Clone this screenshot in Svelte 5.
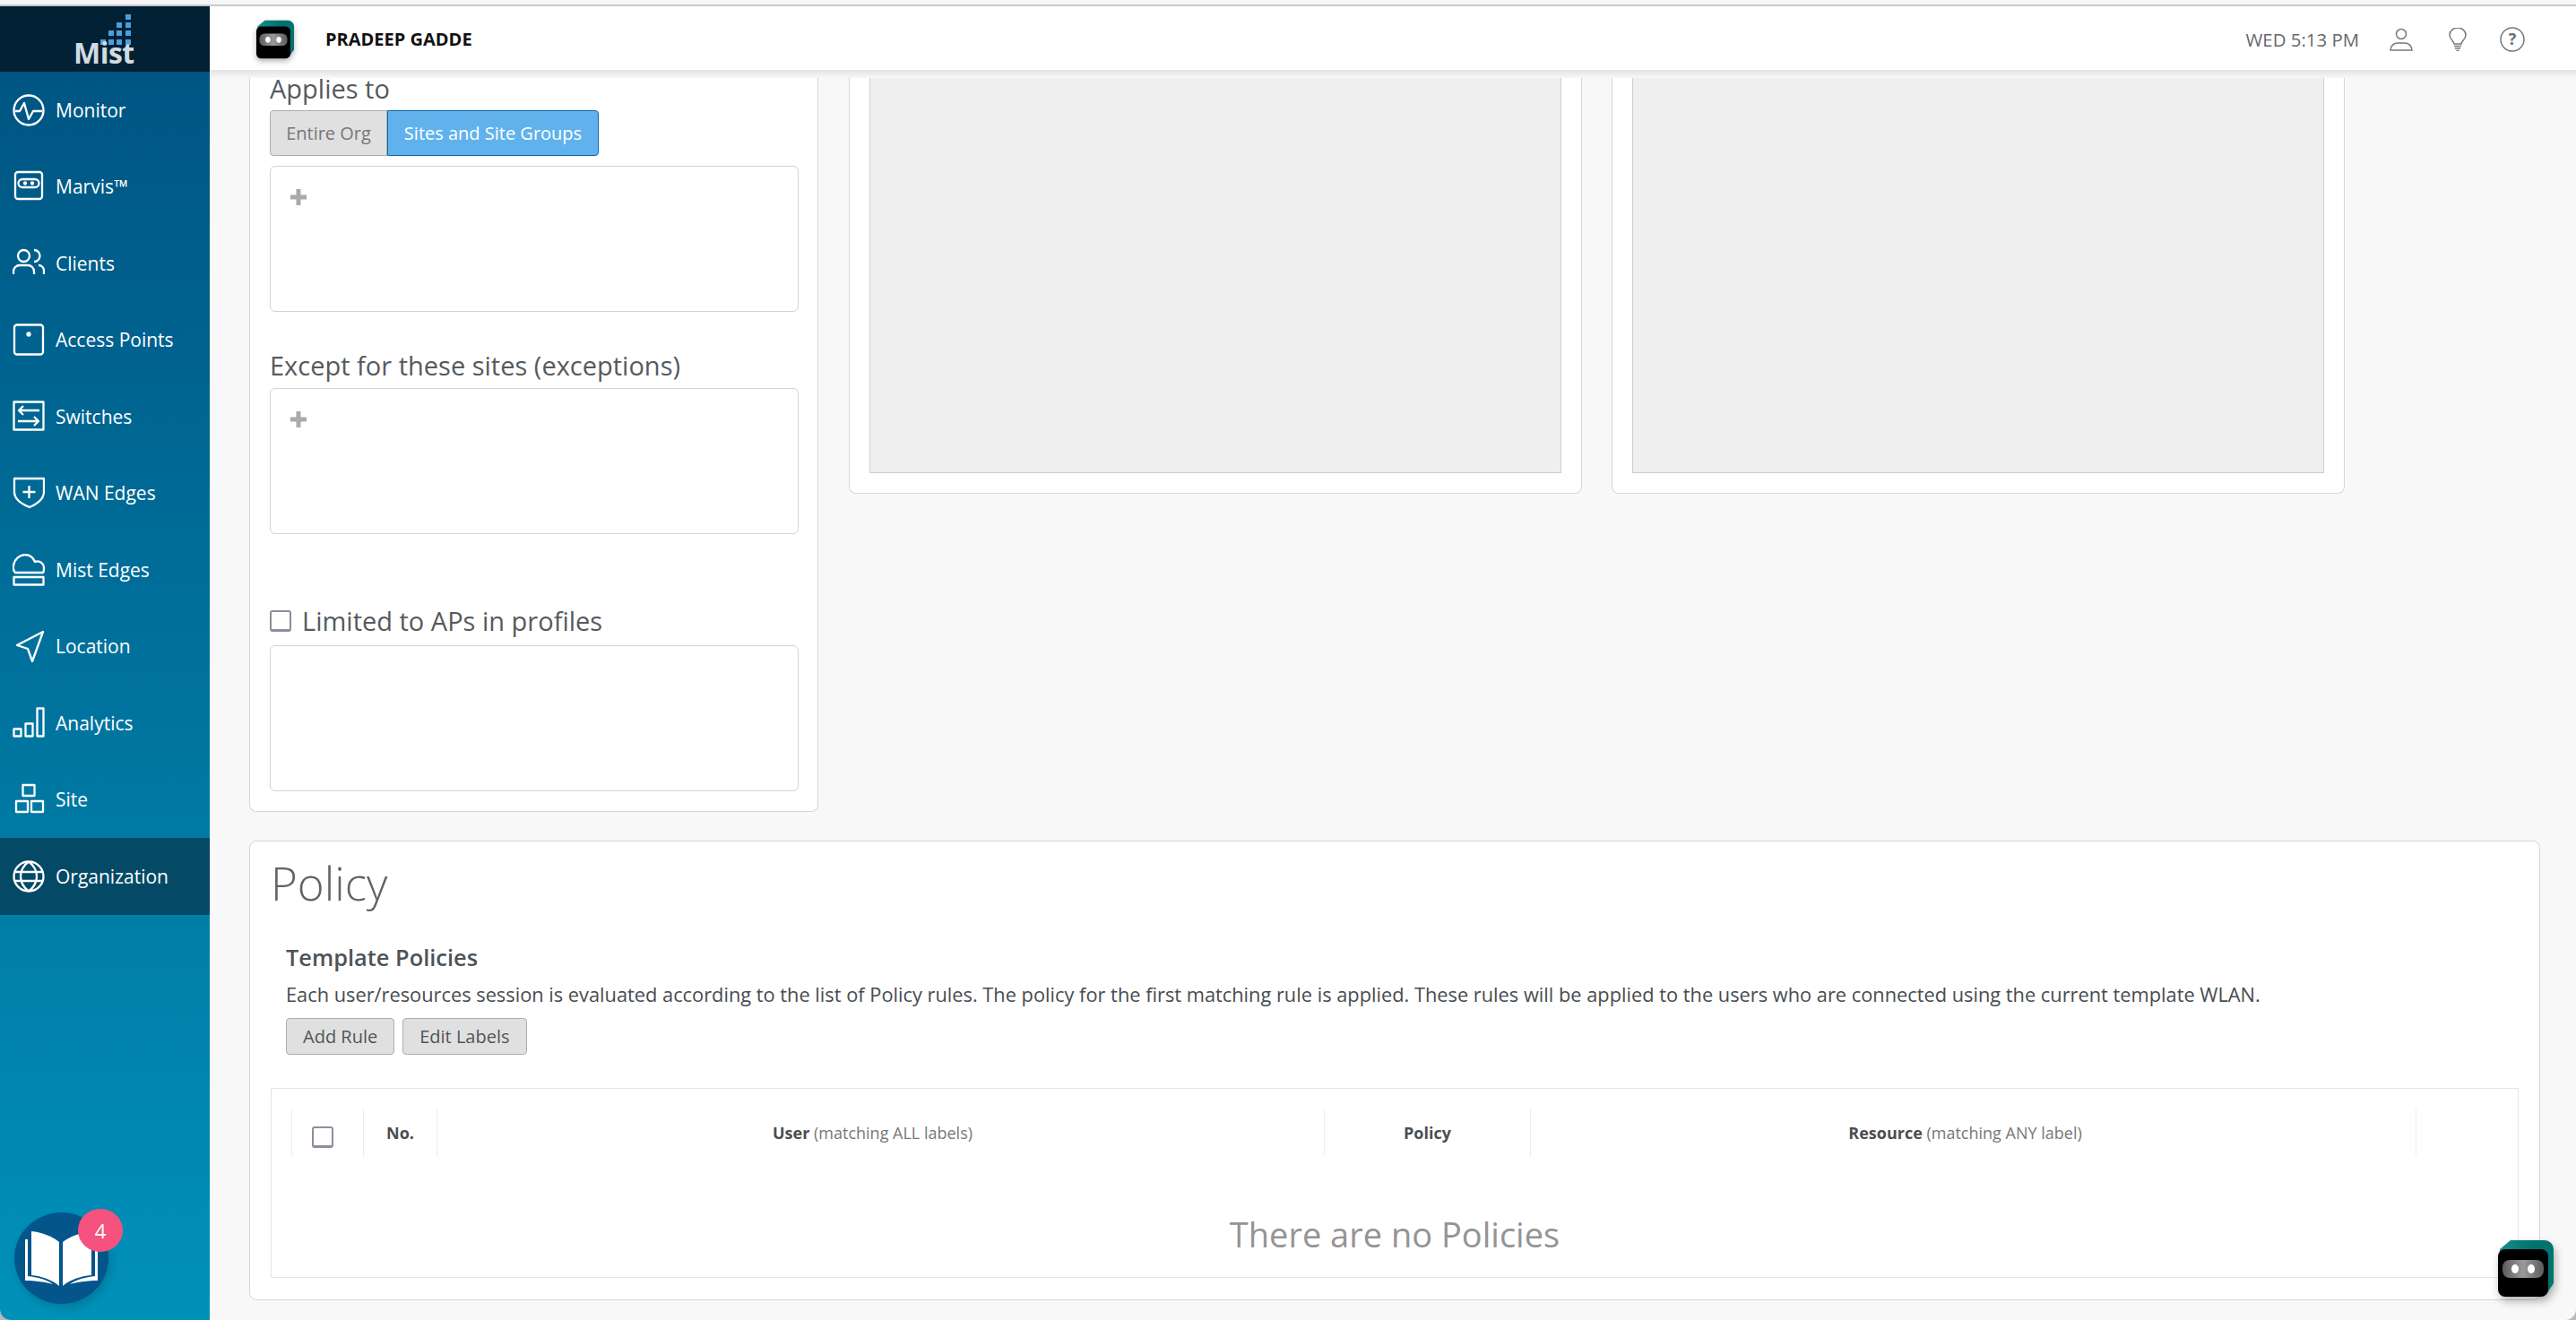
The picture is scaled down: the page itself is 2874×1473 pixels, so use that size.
<script>
    // each icon is one stroked path on a 36x36 box
    const nav = [
        { label: "Monitor", d: "M34.500 18a16.500 16.500 0 1 1-33 0a16.500 16.500 0 1 1 33 0M3 19h5l5-9l5 18l5-9h10" },
        { label: "Marvis™", d: "M6 2h24a3 3 0 0 1 3 3v24a3 3 0 0 1-3 3H6a3 3 0 0 1-3-3V5a3 3 0 0 1 3-3zM11 10h14a4.500 4.500 0 0 1 0 9H11a4.500 4.500 0 0 1 0-9zM13 14.500a1 1 0 1 0 2 0a1 1 0 1 0-2 0M21 14.500a1 1 0 1 0 2 0a1 1 0 1 0-2 0" },
        { label: "Clients", d: "M19 9.500a6.500 6.500 0 1 1-13 0a6.500 6.500 0 1 1 13 0M24 3a6.500 6.500 0 0 1 0 13M1 30v-3a7 7 0 0 1 7-7h9a7 7 0 0 1 7 7v3M29 20a6 6 0 0 1 6 6v4" },
        { label: "Access Points", d: "M5 1.500h26a3 3 0 0 1 3 3v27a3 3 0 0 1-3 3H5a3 3 0 0 1-3-3v-27a3 3 0 0 1 3-3zM16.500 12a1.500 1.500 0 1 0 3 0a1.500 1.500 0 1 0-3 0" },
        { label: "Switches", d: "M1.500 1.500h33v31h-33zM30 11H7M12 6l-5 5l5 5M6 23h23M24 18l5 5l-5 5" },
        { label: "WAN Edges", d: "M2 2h33v15c0 8-7 13-16 17C9 30 2 25 2 17zM18.500 10v14M11.500 17h14" },
        { label: "Mist Edges", d: "M3 21c-2-2-2.500-5-2-8c1-7 7-12 13-12c5 0 9 3 11 8c4-2 10 1 10 7c0 2 0 4-1 5zM1.500 26h33v8.500h-33z" },
        { label: "Location", d: "M34 2L5 17l12 4l5 14z" },
        { label: "Analytics", d: "M1.500 24.500h8v8h-8zM14.500 18.500h8v14h-8zM27.500 1.500h7v31h-7z" },
        { label: "Site", d: "M11.500 2h13v12h-13zM4 20h13v12H4zM21 20h13v12H21z" },
        { label: "Organization", d: "M34.500 18a16.500 16.500 0 1 1-33 0a16.500 16.500 0 1 1 33 0M1.500 13h33M1.500 23h33M18 1.500c-12 9-12 24 0 33M18 1.500c12 9 12 24 0 33", active: true }
    ];

    const columns = [
        { label: "No.", width: 82 },
        { label: "User", note: "(matching ALL labels)", width: 990 },
        { label: "Policy", width: 230 },
        { label: "Resource", note: "(matching ANY label)", width: 989 }
    ];

    // blue squares of the logo, column and row
    const dots = [[3, 0], [2, 1], [3, 1], [1, 2], [2, 2], [3, 2], [0, 3], [1, 3], [2, 3], [3, 3]];
</script>

{#snippet robot(cls)}
    <svg class={cls} viewBox="0 0 62 63">
        <defs>
            <linearGradient id="visor">
                <stop offset="0" stop-color="#5c5c5c" />
                <stop offset=".5" stop-color="#9a9a9a" />
                <stop offset="1" stop-color="#5c5c5c" />
            </linearGradient>
            <linearGradient id="shell">
                <stop offset="0" stop-color="#1c8c8c" />
                <stop offset=".6" stop-color="#00736d" />
            </linearGradient>
        </defs>
        <path d="M14 0h38a10 10 0 0 1 10 10v38l-8 12H2V10z" fill="url(#shell)" />
        <rect y="10" width="56" height="53" rx="8" fill="#000" />
        <rect x="5" y="22" width="46" height="20" rx="8" fill="url(#visor)" />
        <ellipse cx="19" cy="32" rx="4" ry="5" fill="#fff" />
        <ellipse cx="37" cy="32" rx="4" ry="5" fill="#fff" />
    </svg>
{/snippet}

{#snippet picker()}
    <div class="picker">
        <svg class="plus" viewBox="0 0 18 18"><path d="M9 0v18M0 9h18" /></svg>
    </div>
{/snippet}

<div class="window">
    <div class="strip"></div>
    <div class="shell">
        <aside class="sidebar">
            <div class="logo">
                <div class="logo-dots">
                    {#each dots as [c, r]}
                        <i style="left:{c * 9.2}px;top:{r * 9.2}px"></i>
                    {/each}
                </div>
                <span>Mist</span>
            </div>
            <nav>
                {#each nav as item}
                    <div class="nav-item" class:active={item.active}>
                        <svg viewBox="0 0 36 36"><path d={item.d} /></svg>
                        <span>{item.label}</span>
                    </div>
                {/each}
            </nav>
            <div class="book">
                <svg viewBox="0 0 81 62">
                    <path class="page" d="M7 1c12 1 24 6 31 12v49C30 55 18 51 7 50z" />
                    <path class="page" d="M74 1c-12 1-24 6-32 12v49c8-7 20-11 32-12z" />
                    <path class="page" d="M0 10h3v41c10 1 22 4 28 9C24 58 10 56 0 56zM81 10h-3v41c-10 1-22 4-28 9c7-2 21-4 31-4z" />
                </svg>
                <span class="badge">4</span>
            </div>
        </aside>

        <main>
            <header>
                {@render robot("robot-small")}
                <strong class="user">PRADEEP GADDE</strong>
                <span class="time">WED 5:13 PM</span>
                <svg class="head-icon" viewBox="0 0 26 26">
                    <path d="M18.500 7a5.500 5.500 0 1 1-11 0a5.500 5.500 0 1 1 11 0M1 25c0-5 4-8 8-8h8c4 0 8 3 8 8z" />
                </svg>
                <svg class="head-icon bulb" viewBox="0 0 26 26">
                    <path d="M9 18c0-3-5-5-5-10a9 8 0 0 1 18 0c0 5-5 7-5 10zM9 20.500h8M10 23h6M11.500 25.500h3" />
                </svg>
                <svg class="head-icon help" viewBox="0 0 28 28">
                    <circle cx="14" cy="14" r="13" />
                    <text x="14" y="20" text-anchor="middle">?</text>
                </svg>
            </header>

            <div class="content">
                <div class="top-row">
                    <section class="card scope">
                        <h3>Applies to</h3>
                        <div class="toggle">
                            <button>Entire Org</button>
                            <button class="on">Sites and Site Groups</button>
                        </div>
                        {@render picker()}
                        <h3 class="except">Except for these sites (exceptions)</h3>
                        {@render picker()}
                        <label class="limited">
                            <span class="check"></span>
                            <span>Limited to APs in profiles</span>
                        </label>
                        <div class="picker"></div>
                    </section>
                    <section class="card map"><div class="gray"></div></section>
                    <section class="card map"><div class="gray"></div></section>
                </div>

                <section class="card policy">
                    <h1>Policy</h1>
                    <div class="policy-body">
                        <h4>Template Policies</h4>
                        <p>Each user/resources session is evaluated according to the list of Policy rules. The policy for the first matching rule is applied. These rules will be applied to the users who are connected using the current template WLAN.</p>
                        <div class="actions">
                            <button>Add Rule</button>
                            <button>Edit Labels</button>
                        </div>
                    </div>
                    <div class="table">
                        <div class="thead">
                            <div class="th check-cell"><span class="check"></span></div>
                            {#each columns as col}
                                <div class="th" class:noted={col.note} style="width:{col.width}px">
                                    <b>{col.label}</b>
                                    {#if col.note}<span>&nbsp;{col.note}</span>{/if}
                                </div>
                            {/each}
                        </div>
                        <div class="empty">There are no Policies</div>
                    </div>
                </section>
            </div>
        </main>
    </div>
    <div class="float-robot">{@render robot("robot-big")}</div>
</div>

<style>
    :global(body) {
        margin: 0;
        background: #b9b9b9;
        overflow: hidden;
    }

    .window {
        position: relative;
        height: 1473px;
        overflow: hidden;
        border-radius: 0 0 12px 12px;
        font-family: "Open Sans", "Noto Sans", sans-serif;
        color: #555a5e;
        background: #f8f8f8;
    }

    .strip {
        height: 5px;
        background: #f6f6f9;
        border-bottom: 2px solid #cbcbcb;
    }

    .shell {
        display: flex;
        height: 1466px;
    }

    /* sidebar */
    .sidebar {
        position: relative;
        width: 234px;
        flex: none;
        background: linear-gradient(#005280, #0091b9);
        color: #fff;
    }

    .logo {
        position: relative;
        height: 73px;
        background: #022135;
        text-align: center;
    }

    .logo span {
        position: absolute;
        left: 82px;
        top: 33px;
        font-size: 32px;
        line-height: 38px;
        font-weight: 700;
        letter-spacing: -0.5px;
        color: #d3dbe1;
    }

    .logo-dots {
        position: absolute;
        left: 112px;
        top: 9px;
    }

    .logo-dots i {
        position: absolute;
        width: 6px;
        height: 6px;
        background: #4b9fdc;
    }

    .nav-item {
        display: flex;
        align-items: center;
        gap: 12px;
        height: 85.5px;
        padding-left: 14px;
        font-size: 21px;
        font-weight: 500;
    }

    .nav-item svg {
        width: 36px;
        height: 36px;
        flex: none;
    }

    .nav-item path {
        fill: none;
        stroke: #fff;
        stroke-width: 2.3;
        stroke-linejoin: round;
    }

    .nav-item.active {
        background: #044a66;
    }

    .book {
        position: absolute;
        left: 16px;
        bottom: 18px;
        width: 105px;
        height: 102px;
        border-radius: 50%;
        background: #03558c;
        box-shadow: 3px 5px 10px rgba(0, 0, 0, 0.15);
        display: flex;
        align-items: center;
        justify-content: center;
    }

    .book svg {
        width: 81px;
        height: 62px;
    }

    .page {
        fill: #fff;
    }

    .badge {
        position: absolute;
        left: 71px;
        top: -4px;
        width: 50px;
        height: 48px;
        border-radius: 50%;
        background: #f5527f;
        color: #fff;
        font-size: 22px;
        line-height: 48px;
        text-align: center;
    }

    /* header */
    main {
        flex: 1;
        min-width: 0;
        display: flex;
        flex-direction: column;
    }

    header {
        position: relative;
        z-index: 1;
        display: flex;
        align-items: center;
        box-sizing: border-box;
        height: 71px;
        flex: none;
        padding: 2px 57px 0 52px;
        background: #fff;
        box-shadow: 0 1px 2px rgba(0, 0, 0, 0.12);
    }

    header::after {
        content: "";
        position: absolute;
        left: 0;
        right: 0;
        top: 100%;
        height: 9px;
        background: linear-gradient(#e2e2e2, #f8f8f8);
    }

    :global(.robot-small) {
        width: 42px;
        height: 44px;
        filter: drop-shadow(0 3px 3px rgba(0, 0, 0, 0.3));
    }

    .user {
        margin-left: 35px;
        font-size: 20px;
        color: #111;
        font-weight: 700;
    }

    .time {
        margin-left: auto;
        margin-right: 34px;
        font-size: 20.4px;
        color: #66696c;
    }

    .head-icon {
        width: 26px;
        height: 26px;
        margin-left: 0;
        fill: none;
        stroke: #77797b;
        stroke-width: 1.5;
    }

    .head-icon.bulb {
        margin-left: 37px;
    }

    .head-icon.help {
        width: 28px;
        height: 28px;
        margin-left: 34px;
    }

    .help text {
        fill: #6d6f71;
        stroke: none;
        font-size: 18px;
        font-weight: 700;
    }

    /* content */
    .content {
        flex: 1;
        padding: 0 40px 0 44px;
    }

    .card {
        background: #fff;
        border: 1px solid #d6d6d6;
        border-radius: 8px;
        box-sizing: border-box;
    }

    .top-row {
        display: flex;
        align-items: flex-start;
        height: 860px;
    }

    .top-row .card {
        border-top: 0;
        border-top-left-radius: 0;
        border-top-right-radius: 0;
    }

    .scope {
        width: 635px;
        height: 828px;
        padding: 0 21px 0 22px;
        margin-right: 34px;
    }

    .scope h3 {
        margin: 0;
        padding-top: 3px;
        font-size: 29px;
        line-height: 36px;
        font-weight: 400;
        color: #555a5e;
    }

    .toggle {
        display: flex;
        margin: 6px 0 11px;
    }

    .toggle button,
    .actions button {
        height: 51px;
        font: inherit;
        font-size: 20px;
        border: 1px solid #adadad;
        background: #e0e0e0;
        color: #777;
        padding: 0;
        width: 131px;
        border-radius: 4px 0 0 4px;
    }

    .toggle .on {
        background: #61b2ec;
        color: #fff;
        border-color: #0a6aa8;
        border-radius: 0 4px 4px 0;
        box-sizing: border-box;
        width: 236px;
    }

    .picker {
        height: 163px;
        box-sizing: border-box;
        border: 1px solid #d2d2d2;
        border-radius: 6px;
        padding: 25px 22px;
    }

    .plus {
        display: block;
        width: 18px;
        height: 18px;
    }

    .plus path {
        stroke: #aaa;
        stroke-width: 5;
    }

    .scope h3.except {
        padding: 0;
        margin: 42px 0 7px;
    }

    .limited {
        display: flex;
        align-items: center;
        gap: 12px;
        margin: 76px 0 6px;
        height: 42px;
        font-size: 29px;
        line-height: 42px;
    }

    .check {
        display: block;
        box-sizing: border-box;
        width: 24px;
        height: 24px;
        flex: none;
        border: 2px solid #8e8e9c;
        border-bottom-width: 3px;
        border-radius: 3px;
        background: #fff;
    }

    .map {
        width: 818px;
        height: 473px;
        padding: 0 22px 22px;
        margin-right: 33px;
    }

    .gray {
        height: 100%;
        background: #efefef;
        border: 1px solid #cfcfcf;
        border-top: 0;
        box-sizing: border-box;
    }

    /* policy */
    .policy {
        width: 2556px;
        height: 513px;
        padding: 0 23px;
    }

    .policy h1 {
        margin: 0;
        padding-top: 13px;
        font-size: 51px;
        line-height: 66px;
        font-weight: 300;
        color: #5e6367;
    }

    .policy-body {
        padding: 34px 17px 0;
    }

    h4 {
        margin: 0;
        font-size: 25.4px;
        line-height: 32px;
        font-weight: 600;
        color: #4e5357;
    }

    p {
        margin: 11px 0 0;
        font-size: 21.8px;
        line-height: 30px;
        color: #484c50;
    }

    .actions {
        display: flex;
        gap: 9px;
        margin-top: 11px;
    }

    .actions button {
        height: 41px;
        width: auto;
        padding: 0 18px;
        border-radius: 4px;
        color: #50555a;
    }

    .table {
        position: relative;
        box-sizing: border-box;
        margin-top: 37px;
        height: 212px;
        border: 1px solid #e4e4e4;
        padding: 22px 22px 0;
    }

    .thead {
        display: flex;
        height: 53px;
    }

    .th {
        display: flex;
        align-items: center;
        justify-content: center;
        box-sizing: border-box;
        border-left: 1px solid #ececec;
        font-size: 18px;
        color: #777;
    }

    .th.noted {
        padding-right: 18px;
    }

    .th:last-child {
        border-right: 1px solid #ececec;
    }

    .th b {
        font-weight: 700;
        color: #4a4e52;
    }

    .check-cell {
        width: 80px;
        padding: 10px 12px 0 0;
    }

    .empty {
        margin-top: 62px;
        text-align: center;
        font-size: 38px;
        line-height: 50px;
        color: #949494;
    }

    .float-robot {
        position: absolute;
        left: 2787px;
        top: 1384px;
    }

    :global(.robot-big) {
        display: block;
        width: 62px;
        height: 63px;
        filter: drop-shadow(2px 5px 5px rgba(0, 0, 0, 0.3));
    }
</style>
